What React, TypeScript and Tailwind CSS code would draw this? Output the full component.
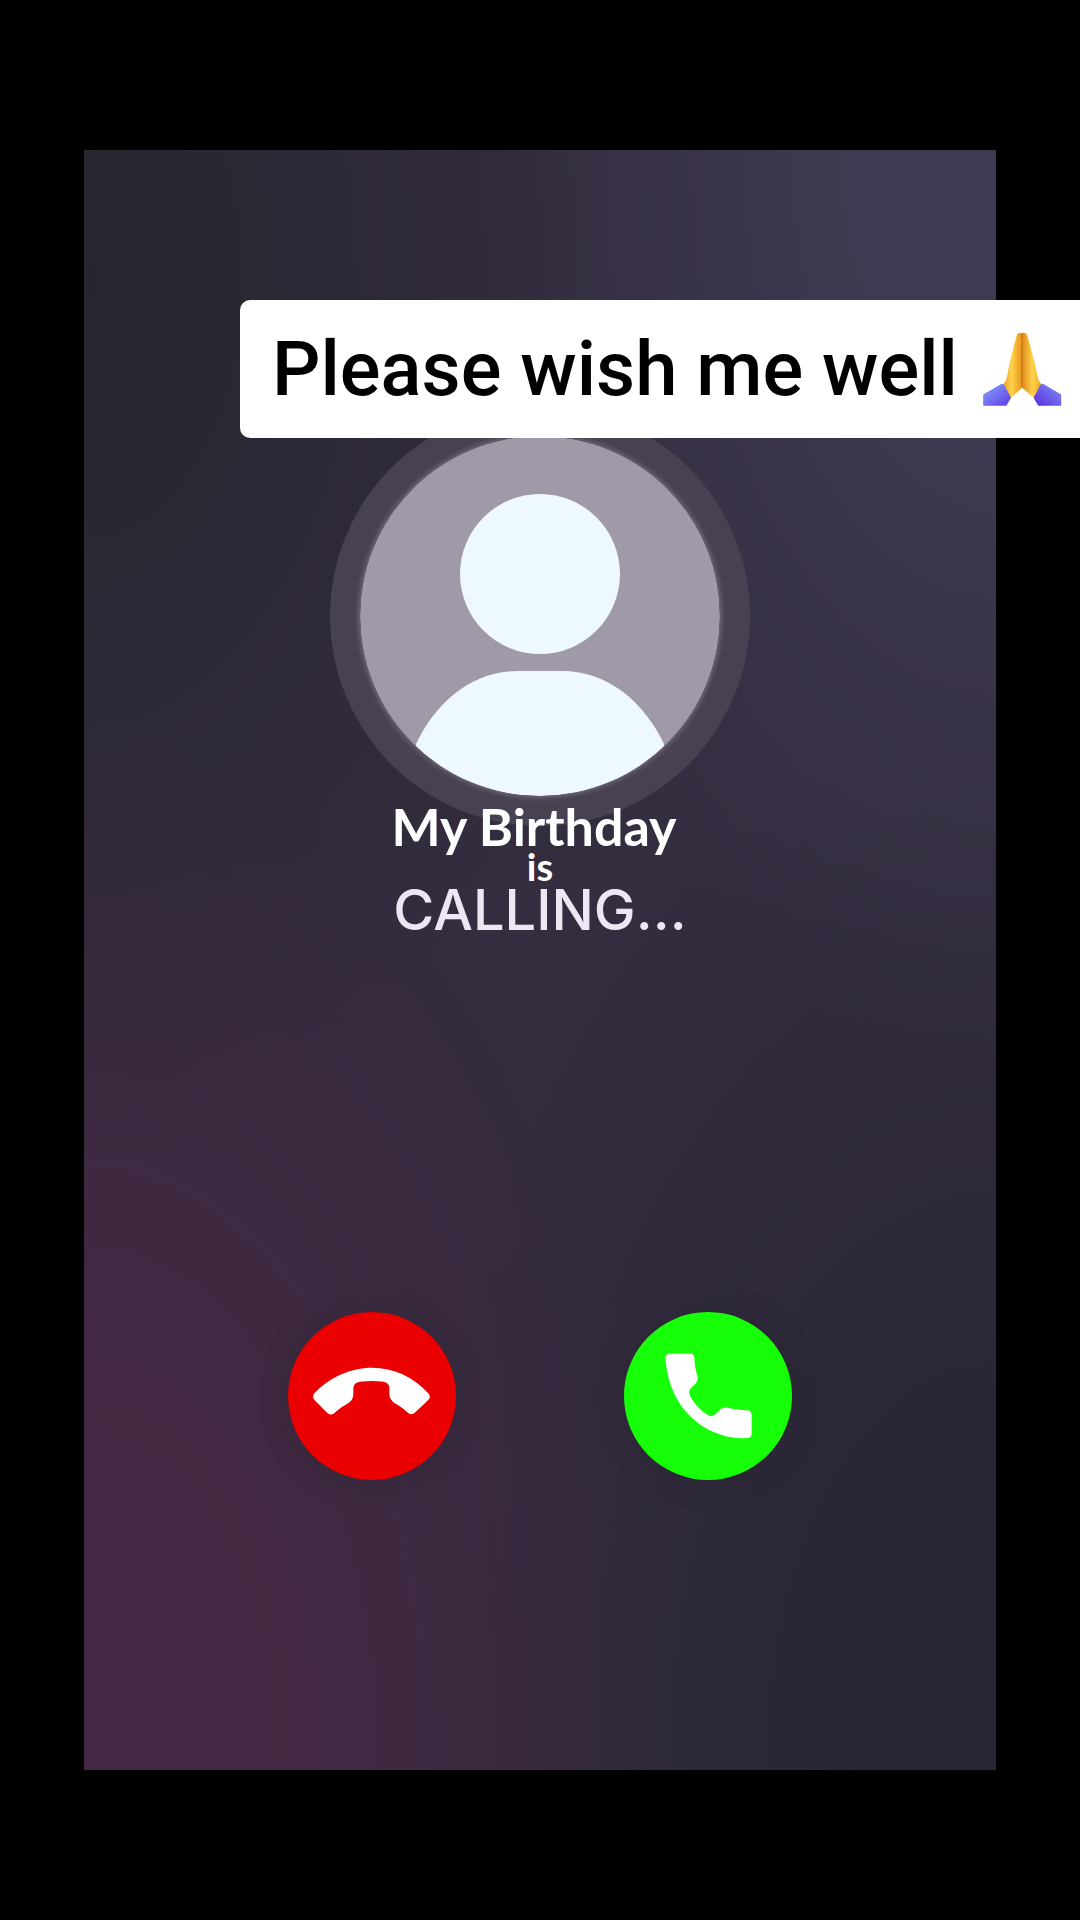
import React from 'react';

const Avatar: React.FC = () => (
  <div className="flex size-[420px] items-center justify-center rounded-full bg-[#474151]">
    <svg viewBox="0 0 360 360" className="size-[360px] rounded-full shadow-[0_0_6px_#8a8496]" role="img" aria-label="Caller">
      <defs>
        <clipPath id="face">
          <circle cx="180" cy="180" r="180" />
        </clipPath>
      </defs>
      <g clipPath="url(#face)">
        <rect width="360" height="360" fill="#9f99a8" />
        <circle cx="180" cy="138" r="80" fill="#edf9ff" />
        <path d="M56 308C76 266 112 235 158 235H202C248 235 284 266 304 308V360H56Z" fill="#edf9ff" />
      </g>
    </svg>
  </div>
);

const PrayingHands: React.FC = () => (
  <svg viewBox="62 94 238 226" className="h-[75px] w-20 shrink-0" role="img" aria-label="Praying hands">
    <defs>
      <linearGradient id="skin" x1="0" x2="1">
        <stop offset="0" stopColor="#f0a020" />
        <stop offset="0.45" stopColor="#ffd24a" />
        <stop offset="1" stopColor="#e9941c" />
      </linearGradient>
      <linearGradient id="skinRight" x1="1" x2="0">
        <stop offset="0" stopColor="#f0a020" />
        <stop offset="0.45" stopColor="#ffd24a" />
        <stop offset="1" stopColor="#e08a1a" />
      </linearGradient>
      <linearGradient id="cuffLeft" x1="0" y1="0" x2="1" y2="1">
        <stop offset="0.3" stopColor="#7b86f6" />
        <stop offset="1" stopColor="#5f3ae0" />
      </linearGradient>
      <linearGradient id="cuffRight" x1="1" y1="0" x2="0" y2="1">
        <stop offset="0.3" stopColor="#7474f2" />
        <stop offset="1" stopColor="#5a2adc" />
      </linearGradient>
    </defs>
    <path d="M166 102Q168 95 181 97V262L146 294L124 252Q134 242 136 228C144 184 154 142 166 102Z" fill="url(#skin)" />
    <path d="M196 102Q194 95 181 97V262L218 294L240 252Q230 242 228 228C220 184 208 142 196 102Z" fill="url(#skinRight)" />
    <path d="M181 100V260" stroke="#c4790f" strokeWidth="4" />
    <path d="M64 282L120 250Q128 250 132 262L148 292L134 316H64Z" fill="url(#cuffLeft)" />
    <path d="M299 282L244 250Q236 250 232 262L216 292L230 316H299Z" fill="url(#cuffRight)" />
  </svg>
);

const DeclineIcon: React.FC = () => (
  <svg viewBox="54 63 504 504" className="size-full" fill="#fff" aria-hidden="true">
    <path d="M132 308Q126 318 134 328L172 366Q184 376 196 364C212 348 228 342 240 332Q250 324 250 308V290Q252 274 270 272Q306 268 342 272Q358 276 358 290V312Q360 326 370 334C384 342 400 352 412 364Q424 376 436 364L474 328Q484 318 476 308C430 256 370 230 306 230C244 230 178 258 132 308Z" />
  </svg>
);

const AnswerIcon: React.FC = () => (
  <svg viewBox="46 63 504 504" className="size-full" fill="#fff" aria-hidden="true">
    <path d="M182 188H246Q256 188 257 200C258 220 260 236 266 254Q270 268 260 278L246 292Q238 302 244 314C258 340 278 360 302 374Q312 378 322 368L336 354Q344 348 356 350C374 354 394 356 414 358Q428 358 429 372V428Q429 440 416 441C380 444 350 438 316 424C240 390 180 320 170 204Q170 190 182 188Z" />
  </svg>
);

const App: React.FC = () => {
  return (
    <main className="relative flex min-h-screen flex-col overflow-hidden bg-black px-[84px] py-[150px]">
      <section className="flex flex-1 flex-col items-center justify-between bg-[#342c3f] bg-[radial-gradient(ellipse_at_0%_8%,#27252e_0%,#27252e00_42%),radial-gradient(ellipse_at_100%_0%,#3f3a51_10%,#3f3a5100_40%),radial-gradient(ellipse_at_0%_100%,#442843_14%,#44284300_46%),radial-gradient(ellipse_at_100%_100%,#282535_8%,#28253500_46%)] pt-64 pb-[290px]">
        <div className="flex flex-col items-center text-white">
          <Avatar />
          <h1 className="-mt-7 pr-3 font-['Lato',sans-serif] text-[52px] leading-[56px] font-bold">My Birthday</h1>
          <p className="font-['Lato',sans-serif] text-[38px] leading-6 font-bold">is</p>
          <p className="font-['Inter',sans-serif] text-[56px] leading-[64px] font-medium text-[#eee6f2]">CALLING...</p>
        </div>
        <div className="flex gap-[168px]">
          <button type="button" aria-label="Decline" className="size-[168px] rounded-full bg-[#ea0000] shadow-[0_0_24px_#2a263099]">
            <DeclineIcon />
          </button>
          <button type="button" aria-label="Answer" className="size-[168px] rounded-full bg-[#17ff08] shadow-[0_0_24px_#2a263099]">
            <AnswerIcon />
          </button>
        </div>
      </section>

      {/* Caption runs off the right edge of the screen */}
      <div className="absolute top-[300px] right-0 left-60 flex h-[138px] items-center gap-6 rounded-l-[10px] bg-white pl-8 whitespace-nowrap">
        <p className="font-['Roboto',sans-serif] text-[76px] leading-none font-medium text-black">Please wish me well</p>
        <PrayingHands />
      </div>
    </main>
  );
};

export default App;
